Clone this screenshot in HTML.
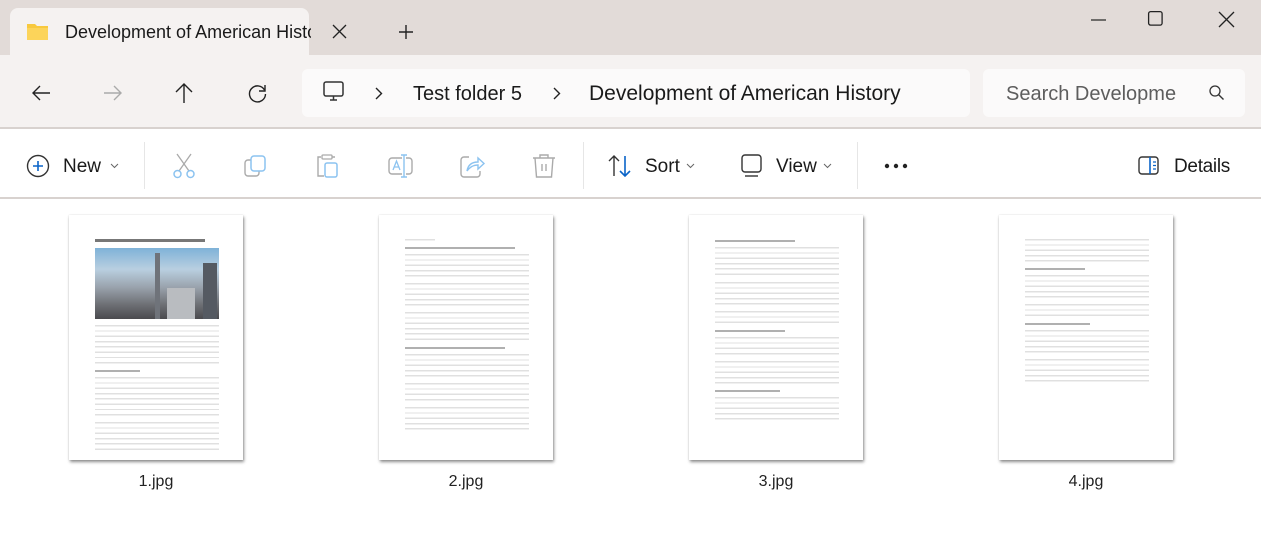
<!DOCTYPE html>
<html><head><meta charset="utf-8"><style>
*{margin:0;padding:0;box-sizing:border-box}
body{width:1261px;height:549px;overflow:hidden;background:#fff;font-family:"Segoe UI","Liberation Sans",sans-serif;color:#1a1a1a;position:relative}
.abs{position:absolute}
.title{left:0;top:0;width:1261px;height:56px;background:#e2dbd8}
.tab{left:10px;top:8px;width:299px;height:50px;background:#f5f2f1;border-radius:8px 8px 0 0}
.nav{left:0;top:55px;width:1261px;height:74px;background:#f5f2f1;border-bottom:2px solid #d8d2cf}
.addr{left:302px;top:69px;width:668px;height:48px;background:#fbfafa;border-radius:6px}
.search{left:983px;top:69px;width:262px;height:48px;background:#fbfafa;border-radius:6px}
.tb{left:0;top:130px;width:1261px;height:69px;background:#fff;border-bottom:2px solid #d8d2cf}
.t{position:absolute;font-size:19px;white-space:nowrap}
.sep{position:absolute;top:142px;width:1px;height:47px;background:#e6e6e6}
.page{position:absolute;top:215px;width:174px;height:245px;background:#fff;box-shadow:1px 2px 3px rgba(0,0,0,.45),0 0 1px rgba(0,0,0,.15)}
.c{position:absolute;left:26px;top:24px;width:124px}
.p{background:repeating-linear-gradient(to bottom,#e0e0e0 0 1.4px,transparent 1.4px 5.3px);margin-bottom:3px}
.h{height:2px;background:#b0b0b0;margin:1px 0 5px}
.lbl{position:absolute;top:473px;font-size:16px;width:174px;text-align:center;color:#222}
svg{position:absolute;overflow:visible}
</style></head><body>
<div class="abs title"></div>
<div class="abs tab"></div>
<svg style="left:26px;top:22px" width="24" height="20"><path d="M1 2h8l2 2h11v14H1z" fill="#f8c93e"/><path d="M1 6h21v12H1z" fill="#fcd45a"/></svg>
<div class="t" style="left:65px;top:22px;font-size:18px;width:246px;overflow:hidden">Development of American History</div>
<svg style="left:333px;top:25px" width="13" height="13"><path d="M0 0L13 13M13 0L0 13" stroke="#222" stroke-width="1.3"/></svg>
<svg style="left:399px;top:25px" width="14" height="14"><path d="M7 0V14M0 7H14" stroke="#222" stroke-width="1.4"/></svg>
<svg style="left:1091px;top:19px" width="15" height="2"><path d="M0 1H15" stroke="#222" stroke-width="1.2"/></svg>
<svg style="left:1148px;top:11px" width="15" height="15"><rect x=".6" y=".6" width="13.5" height="13.5" rx="2" fill="none" stroke="#222" stroke-width="1.3"/></svg>
<svg style="left:1219px;top:12px" width="15" height="15"><path d="M0 0L15 15M15 0L0 15" stroke="#222" stroke-width="1.3"/></svg>
<div class="abs nav"></div>
<svg style="left:32px;top:85px" width="19" height="16"><path d="M18 8H1M8 1L1 8L8 15" fill="none" stroke="#222" stroke-width="1.4"/></svg>
<svg style="left:104px;top:85px" width="19" height="16"><path d="M0 8H17M10 1L17 8L10 15" fill="none" stroke="#aaa" stroke-width="1.4"/></svg>
<svg style="left:175px;top:83px" width="18" height="20"><path d="M9 20V1M1 9L9 1L17 9" fill="none" stroke="#222" stroke-width="1.4"/></svg>
<svg style="left:248px;top:84px" width="19" height="19"><path d="M16.5 6A8 8 0 1 0 17.5 10" fill="none" stroke="#222" stroke-width="1.4"/><path d="M17 1V7H11" fill="none" stroke="#222" stroke-width="1.4"/></svg>
<div class="abs addr"></div>
<div class="abs search"></div>
<svg style="left:323px;top:81px" width="22" height="22"><rect x="1" y="1" width="19" height="14" rx="2" fill="none" stroke="#333" stroke-width="1.5"/><path d="M7 19H14M10.5 15V19" stroke="#333" stroke-width="1.5"/></svg>
<svg style="left:375px;top:87px" width="8" height="13"><path d="M1 1L6.5 6.5L1 12" fill="none" stroke="#222" stroke-width="1.4"/></svg>
<div class="t" style="left:413px;top:83px;font-size:20px">Test folder 5</div>
<svg style="left:553px;top:87px" width="8" height="13"><path d="M1 1L6.5 6.5L1 12" fill="none" stroke="#222" stroke-width="1.4"/></svg>
<div class="t" style="left:589px;top:82px;font-size:21px">Development of American History</div>
<div class="t" style="left:1006px;top:83px;font-size:20px;color:#5d5d5d">Search Developme</div>
<svg style="left:1209px;top:85px" width="16" height="16"><circle cx="6" cy="6" r="5" fill="none" stroke="#333" stroke-width="1.3"/><path d="M9.7 9.7L14.5 14.5" stroke="#333" stroke-width="1.4"/></svg>
<div class="abs tb"></div>
<svg style="left:26px;top:154px" width="24" height="24"><circle cx="12" cy="12" r="10.5" fill="none" stroke="#333" stroke-width="1.4"/><path d="M12 7V17M7 12H17" stroke="#0a64c8" stroke-width="1.6"/></svg>
<div class="t" style="left:63px;top:156px">New</div>
<svg style="left:110px;top:163px" width="9" height="6"><path d="M1 1L4.5 4.5L8 1" fill="none" stroke="#666" stroke-width="1"/></svg>
<div class="sep" style="left:144px"></div>
<svg style="left:172px;top:153px" width="24" height="26"><path d="M5 1L17 18M19 1L7 18" stroke="#aaa" stroke-width="1.3"/><circle cx="5.5" cy="21" r="3.5" fill="none" stroke="#8cc3f0" stroke-width="1.5"/><circle cx="18.5" cy="21" r="3.5" fill="none" stroke="#8cc3f0" stroke-width="1.5"/></svg>
<svg style="left:244px;top:155px" width="24" height="24"><rect x="1" y="5" width="14" height="16" rx="3" fill="none" stroke="#aaa" stroke-width="1.4"/><rect x="7" y="1" width="14" height="15" rx="3" fill="#fff" stroke="#8cc3f0" stroke-width="1.5"/></svg>
<svg style="left:316px;top:153px" width="24" height="26"><path d="M5 4H2V23H8M16 4H19" fill="none" stroke="#aaa" stroke-width="1.4"/><rect x="6" y="2" width="10" height="4" rx="1" fill="none" stroke="#aaa" stroke-width="1.3"/><rect x="9" y="10" width="12" height="14" rx="2" fill="none" stroke="#8cc3f0" stroke-width="1.5"/></svg>
<svg style="left:388px;top:153px" width="26" height="26"><rect x="1" y="5" width="23" height="16" rx="3" fill="none" stroke="#aaa" stroke-width="1.4"/><rect x="14" y="3" width="4" height="21" fill="#fff"/><path d="M16 2V24M13 2H19M13 24H19" stroke="#8cc3f0" stroke-width="1.4"/><path d="M5 17L8.5 8L12 17M6.3 14H10.7" fill="none" stroke="#8cc3f0" stroke-width="1.3"/></svg>
<svg style="left:460px;top:154px" width="26" height="24"><path d="M9 3H4a3 3 0 0 0-3 3V20a3 3 0 0 0 3 3H17a3 3 0 0 0 3-3V17" fill="none" stroke="#aaa" stroke-width="1.4"/><path d="M7 17C8 11 12 8 18 8V4L24 9.5L18 15V11C13 11 10 13 7 17Z" fill="none" stroke="#8cc3f0" stroke-width="1.4"/></svg>
<svg style="left:532px;top:153px" width="24" height="26"><path d="M1 5H23M8 5V2H16V5M3 5L4.5 24H19.5L21 5M10 11V18M14 11V18" fill="none" stroke="#aaa" stroke-width="1.4"/></svg>
<div class="sep" style="left:583px"></div>
<svg style="left:608px;top:155px" width="24" height="22"><path d="M6 21V1M1 6L6 1L11 6" fill="none" stroke="#333" stroke-width="1.4"/><path d="M17 1V21M12 16L17 21L22 16" fill="none" stroke="#0a64c8" stroke-width="1.6"/></svg>
<div class="t" style="left:645px;top:156px">Sort</div>
<svg style="left:686px;top:163px" width="9" height="6"><path d="M1 1L4.5 4.5L8 1" fill="none" stroke="#666" stroke-width="1"/></svg>
<svg style="left:741px;top:154px" width="22" height="24"><rect x="1" y="1" width="19" height="17" rx="3" fill="none" stroke="#333" stroke-width="1.4"/><path d="M4 22H17" stroke="#333" stroke-width="1.4"/></svg>
<div class="t" style="left:776px;top:156px">View</div>
<svg style="left:823px;top:163px" width="9" height="6"><path d="M1 1L4.5 4.5L8 1" fill="none" stroke="#666" stroke-width="1"/></svg>
<div class="sep" style="left:857px"></div>
<svg style="left:884px;top:163px" width="24" height="6"><circle cx="3" cy="3" r="2.2" fill="#222"/><circle cx="12" cy="3" r="2.2" fill="#222"/><circle cx="21" cy="3" r="2.2" fill="#222"/></svg>
<svg style="left:1138px;top:156px" width="22" height="20"><rect x="1" y="1" width="19" height="17" rx="3" fill="none" stroke="#333" stroke-width="1.4"/><path d="M12 1V18" stroke="#0a64c8" stroke-width="1.6"/><path d="M15 6H18M15 9.5H18M15 13H18" stroke="#0a64c8" stroke-width="1.2"/></svg>
<div class="t" style="left:1174px;top:156px;letter-spacing:-0.3px">Details</div>

<div class="page" style="left:69px"><div class="c">
<div style="height:3px;width:110px;background:#777;margin:0 0 6px"></div>
<div style="height:71px;background:linear-gradient(180deg,#7fb2d8 0%,#b9cfe0 30%,#9aa3ad 55%,#6d6f74 80%,#4a4a4e 100%);margin-bottom:6px;position:relative;overflow:hidden"><div style="position:absolute;left:60px;top:5px;width:5px;height:66px;background:#6f737a"></div><div style="position:absolute;left:72px;top:40px;width:28px;height:31px;background:#b9bcc0"></div><div style="position:absolute;right:2px;top:15px;width:14px;height:56px;background:#555a62"></div></div>
<div class="p" style="height:42px"></div><div class="h" style="width:45px"></div>
<div class="p" style="height:42px"></div><div class="p" style="height:32px"></div>
</div></div>
<div class="page" style="left:379px"><div class="c">
<div class="p" style="height:5px;width:30px"></div><div class="h" style="width:110px"></div>
<div class="p" style="height:26px"></div><div class="p" style="height:26px"></div><div class="p" style="height:32px"></div>
<div class="h" style="width:100px"></div>
<div class="p" style="height:26px"></div><div class="p" style="height:21px"></div><div class="p" style="height:26px"></div>
</div></div>
<div class="page" style="left:689px"><div class="c">
<div class="h" style="width:80px"></div>
<div class="p" style="height:32px"></div><div class="p" style="height:26px"></div><div class="p" style="height:16px"></div>
<div class="h" style="width:70px"></div>
<div class="p" style="height:21px"></div><div class="p" style="height:26px"></div>
<div class="h" style="width:65px"></div>
<div class="p" style="height:26px"></div>
</div></div>
<div class="page" style="left:999px"><div class="c">
<div class="p" style="height:26px"></div><div class="h" style="width:60px"></div>
<div class="p" style="height:26px"></div><div class="p" style="height:16px"></div>
<div class="h" style="width:65px"></div>
<div class="p" style="height:26px"></div><div class="p" style="height:26px"></div>
</div></div>
<div class="lbl" style="left:69px">1.jpg</div>
<div class="lbl" style="left:379px">2.jpg</div>
<div class="lbl" style="left:689px">3.jpg</div>
<div class="lbl" style="left:999px">4.jpg</div>
</body></html>
